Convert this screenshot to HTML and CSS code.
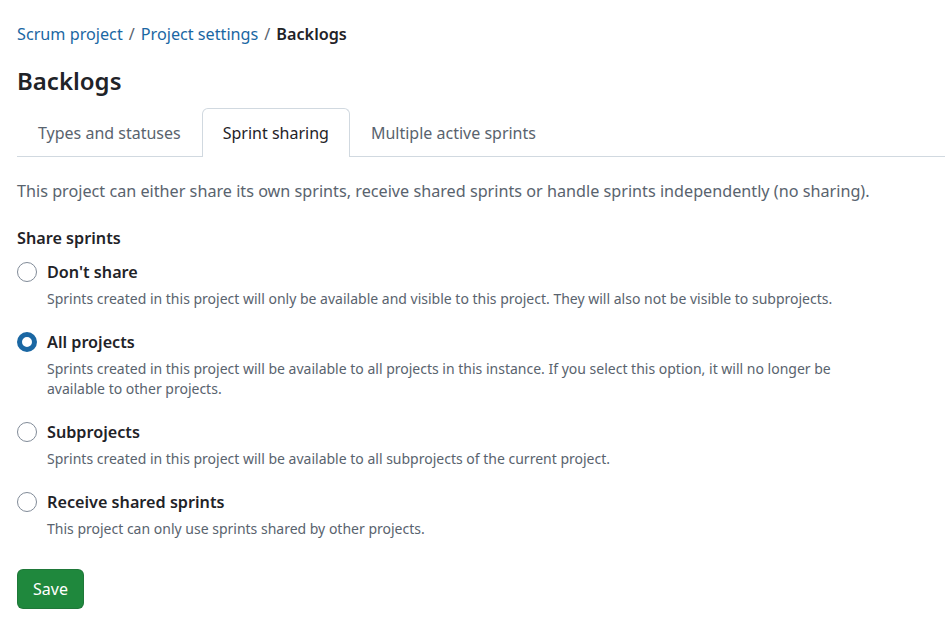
FILE: index.html
```html
<!DOCTYPE html>
<html lang="en">
<head>
<meta charset="utf-8">
<title>Backlogs</title>
<link rel="stylesheet" href="styles.css">
</head>
<body>
<div class="page">
  <nav class="breadcrumb">
    <a href="#">Scrum project</a><span class="sep">/</span><a href="#">Project settings</a><span class="sep">/</span><strong>Backlogs</strong>
  </nav>
  <h1 class="title">Backlogs</h1>
  <div class="tabs">
    <a class="tab" href="#">Types and statuses</a>
    <a class="tab active" href="#">Sprint sharing</a>
    <a class="tab" href="#">Multiple active sprints</a>
  </div>
  <p class="intro">This project can either share its own sprints, receive shared sprints or handle sprints independently (no sharing).</p>
  <fieldset class="group">
    <legend class="group-label">Share sprints</legend>
    <div class="options">
      <label class="option">
        <span class="radio"></span>
        <span class="option-body">
          <span class="option-title">Don't share</span>
          <span class="option-desc">Sprints created in this project will only be available and visible to this project. They will also not be visible to subprojects.</span>
        </span>
      </label>
      <label class="option">
        <span class="radio checked"></span>
        <span class="option-body">
          <span class="option-title">All projects</span>
          <span class="option-desc">Sprints created in this project will be available to all projects in this instance. If you select this option, it will no longer be available to other projects.</span>
        </span>
      </label>
      <label class="option">
        <span class="radio"></span>
        <span class="option-body">
          <span class="option-title">Subprojects</span>
          <span class="option-desc">Sprints created in this project will be available to all subprojects of the current project.</span>
        </span>
      </label>
      <label class="option">
        <span class="radio"></span>
        <span class="option-body">
          <span class="option-title">Receive shared sprints</span>
          <span class="option-desc">This project can only use sprints shared by other projects.</span>
        </span>
      </label>
    </div>
  </fieldset>
  <button class="btn-save" type="button">Save</button>
</div>
</body>
</html>
```

FILE: styles.css
```css
* { box-sizing: border-box; }
html, body { margin: 0; padding: 0; background: #fff; }
body {
  font-family: "Noto Sans", "Open Sans", sans-serif;
  color: #1f2328;
  font-size: 16.2px;
}
.page {
  padding: 22px 0 0 17px;
}
.breadcrumb {
  display: flex;
  align-items: center;
  font-size: 16.2px;
  line-height: 24px;
  height: 24px;
}
.breadcrumb a { color: #1a67a3; text-decoration: none; }
.breadcrumb .sep { color: #59636e; margin: 0 6px; }
.breadcrumb strong { font-weight: 600; color: #1f2328; }
.title {
  margin: 20px 0 0;
  font-size: 24px;
  line-height: 30px;
  font-weight: 600;
}
.tabs {
  margin-top: 12px;
  display: flex;
  border-bottom: 1px solid #d1d9e0;
  height: 49px;
}
.tab {
  display: flex;
  align-items: center;
  padding: 0 20px;
  color: #59636e;
  text-decoration: none;
  font-size: 16px;
  border: 1px solid transparent;
  border-bottom: none;
  border-radius: 6px 6px 0 0;
  margin-bottom: -1px;
  height: 49px;
}
.tab.active {
  color: #1f2328;
  background: #fff;
  border-color: #d1d9e0;
}
.intro {
  margin: 22px 0 0;
  line-height: 24px;
  color: #59636e;
}
.group {
  border: 0;
  margin: 23px 0 0;
  padding: 0;
}
.group-label {
  padding: 0;
  font-weight: 600;
  line-height: 24px;
  font-size: 16.2px;
}
.options {
  margin-top: 10px;
  display: flex;
  flex-direction: column;
  gap: 21px;
}
.option {
  display: flex;
  align-items: flex-start;
  gap: 10px;
}
.radio {
  flex: none;
  width: 20px;
  height: 20px;
  margin-top: 2px;
  border: 1px solid #818b98;
  border-radius: 50%;
  background: #fff;
}
.radio.checked {
  border: 5px solid #1a67a3;
}
.option-body {
  display: flex;
  flex-direction: column;
}
.option-title {
  font-weight: 600;
  line-height: 24px;
  font-size: 16.2px;
}
.option-desc {
  margin-top: 5px;
  font-size: 14px;
  line-height: 20px;
  color: #59636e;
  max-width: 800px;
}
.btn-save {
  margin-top: 30px;
  height: 40px;
  width: 67px;
  background: #1f883d;
  color: #fff;
  border: 1px solid rgba(31,35,40,0.15);
  border-radius: 6px;
  font-family: inherit;
  font-size: 16px;
  padding: 0;
}
```
